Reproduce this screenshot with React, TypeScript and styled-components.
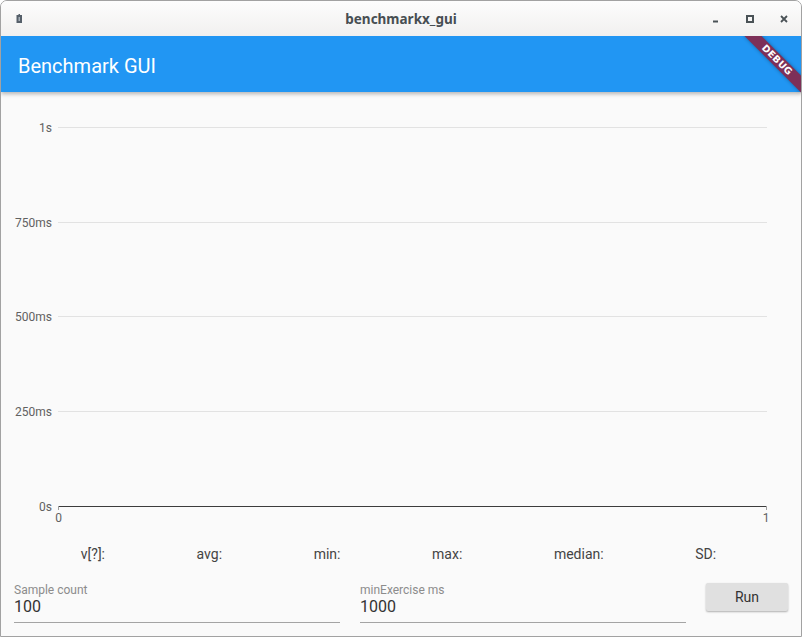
import React from 'react';
import styled, { createGlobalStyle } from 'styled-components';

const GlobalStyle = createGlobalStyle`
    html, body {
        margin: 0;
        padding: 0;
        background: #ffffff;
    }
`;

const Window = styled.div`
    width: 802px;
    height: 637px;
    box-sizing: border-box;
    border: 1px solid #a2a2a2;
    border-radius: 7px 7px 0 0;
    overflow: hidden;
    display: flex;
    flex-direction: column;
    background: #fafafa;
    font-family: Roboto, 'Noto Sans', sans-serif;
`;

const TitleBar = styled.div`
    height: 35px;
    flex: none;
    display: grid;
    grid-template-columns: 1fr auto 1fr;
    align-items: center;
    background: linear-gradient(#fdfdfd, #f1f0ef);
`;

const AppIcon = styled.div`
    padding-left: 15px;
    display: flex;
    align-items: center;
`;

const WindowTitle = styled.div`
    font-family: 'Noto Sans', 'DejaVu Sans', sans-serif;
    font-weight: 700;
    font-size: 13.5px;
    color: #474e52;
`;

const Controls = styled.div`
    display: flex;
    justify-content: flex-end;
`;

const ControlButton = styled.div`
    width: 34px;
    height: 35px;
    display: flex;
    align-items: center;
    justify-content: center;
`;

const AppArea = styled.div`
    position: relative;
    flex: 1;
    display: flex;
    flex-direction: column;
    overflow: hidden;
`;

const AppBar = styled.div`
    height: 56px;
    box-sizing: border-box;
    flex: none;
    display: flex;
    align-items: center;
    padding: 3px 0 0 17px;
    background: #2196f3;
    color: #ffffff;
    font-size: 20px;
    box-shadow: 0 2px 4px rgba(0, 0, 0, 0.28);
    position: relative;
    z-index: 1;
`;

const DebugBanner = styled.div`
    position: absolute;
    top: 18px;
    right: -16px;
    width: 80px;
    height: 12px;
    transform: rotate(45deg);
    background: #7d3058;
    box-shadow: 0 0 4px rgba(0, 0, 0, 0.35);
    color: #ffffff;
    font-family: 'DejaVu Sans', sans-serif;
    font-weight: 700;
    font-size: 9.5px;
    line-height: 12px;
    text-align: center;
    letter-spacing: 0.3px;
    z-index: 5;
`;

const Chart = styled.svg`
    display: block;
    flex: none;
    width: 800px;
    height: 440px;
`;

const StatsRow = styled.div`
    height: 43px;
    flex: none;
    display: flex;
    align-items: center;
    justify-content: space-around;
    padding: 0 39px 0 34px;
`;

const Stat = styled.span`
    font-size: 14px;
    color: #444444;
`;

const FormRow = styled.div`
    flex: 1;
    display: flex;
    align-items: flex-start;
    gap: 20px;
    padding: 0 13px;
`;

const Field = styled.div`
    width: 326px;
    margin-top: 8px;
    padding-bottom: 6px;
    border-bottom: 1px solid #a4a4a4;
    display: flex;
    flex-direction: column;
`;

const FieldLabel = styled.div`
    font-size: 12px;
    line-height: 14px;
    color: #8c8c8c;
`;

const FieldValue = styled.div`
    font-size: 16px;
    line-height: 19px;
    color: #333333;
`;

const RunButton = styled.button`
    width: 82px;
    height: 28px;
    margin-top: 8px;
    border: none;
    border-radius: 2px;
    background: #e0e0e0;
    box-shadow: 0 1px 2px rgba(0, 0, 0, 0.3);
    font-family: Roboto, sans-serif;
    font-size: 14px;
    color: #333333;
    padding: 0;
`;

const yTicks = [
    { label: '1s', y: 35 },
    { label: '750ms', y: 130 },
    { label: '500ms', y: 224 },
    { label: '250ms', y: 319 },
];

const stats = ['v[?]:', 'avg:', 'min:', 'max:', 'median:', 'SD:'];

const ICON = '#4a5256';

const App = () => {

    return (
        <Window>
            <GlobalStyle />

            <TitleBar>
                <AppIcon>
                    <svg width="7" height="9" viewBox="0 0 7 9">
                        <rect x="0.5" y="1" width="5.5" height="8" fill="#56606a" />
                        <rect x="2.5" y="0" width="1.5" height="2" fill="#56606a" />
                        <rect x="2.5" y="3" width="1.5" height="4" fill="#a6b0b8" />
                    </svg>
                </AppIcon>
                <WindowTitle>benchmarkx_gui</WindowTitle>
                <Controls>
                    <ControlButton>
                        <svg width="8" height="8" viewBox="0 0 8 8">
                            <rect x="1" y="5.5" width="5" height="2" fill={ ICON } />
                        </svg>
                    </ControlButton>
                    <ControlButton>
                        <svg width="8" height="8" viewBox="0 0 8 8">
                            <rect x="1" y="1" width="6" height="6" fill="none" stroke={ ICON } strokeWidth="2" />
                        </svg>
                    </ControlButton>
                    <ControlButton>
                        <svg width="8" height="8" viewBox="0 0 8 8">
                            <path d="M1 1 L7 7 M7 1 L1 7" stroke={ ICON } strokeWidth="1.8" />
                        </svg>
                    </ControlButton>
                </Controls>
            </TitleBar>

            <AppArea>
                <DebugBanner>DEBUG</DebugBanner>

                <AppBar>Benchmark GUI</AppBar>

                <Chart viewBox="0 0 800 440">
                    { yTicks.map(t => (
                        <g key={ t.label }>
                            <line x1="57" x2="766" y1={ t.y + 0.5 } y2={ t.y + 0.5 } stroke="#e2e2e2" strokeWidth="1" />
                            <text x="51" y={ t.y + 0.5 } textAnchor="end" dominantBaseline="central"
                                fontFamily="Roboto, sans-serif" fontSize="12" fill="#616161">{ t.label }</text>
                        </g>
                    ))}
                    <line x1="57" x2="766" y1="414.5" y2="414.5" stroke="#3c3c3c" strokeWidth="1" />
                    <line x1="57.5" x2="57.5" y1="414" y2="418" stroke="#9e9e9e" strokeWidth="1" />
                    <line x1="765.5" x2="765.5" y1="414" y2="418" stroke="#9e9e9e" strokeWidth="1" />
                    <text x="51" y="414.5" textAnchor="end" dominantBaseline="central"
                        fontFamily="Roboto, sans-serif" fontSize="12" fill="#616161">0s</text>
                    <text x="57.5" y="425.5" textAnchor="middle" dominantBaseline="central"
                        fontFamily="Roboto, sans-serif" fontSize="12" fill="#616161">0</text>
                    <text x="765" y="425.5" textAnchor="middle" dominantBaseline="central"
                        fontFamily="Roboto, sans-serif" fontSize="12" fill="#616161">1</text>
                </Chart>

                <StatsRow>
                    { stats.map(s => <Stat key={ s }>{ s }</Stat>) }
                </StatsRow>

                <FormRow>
                    <Field>
                        <FieldLabel>Sample count</FieldLabel>
                        <FieldValue>100</FieldValue>
                    </Field>
                    <Field>
                        <FieldLabel>minExercise ms</FieldLabel>
                        <FieldValue>1000</FieldValue>
                    </Field>
                    <RunButton>Run</RunButton>
                </FormRow>
            </AppArea>
        </Window>
    );
}

export default App;
